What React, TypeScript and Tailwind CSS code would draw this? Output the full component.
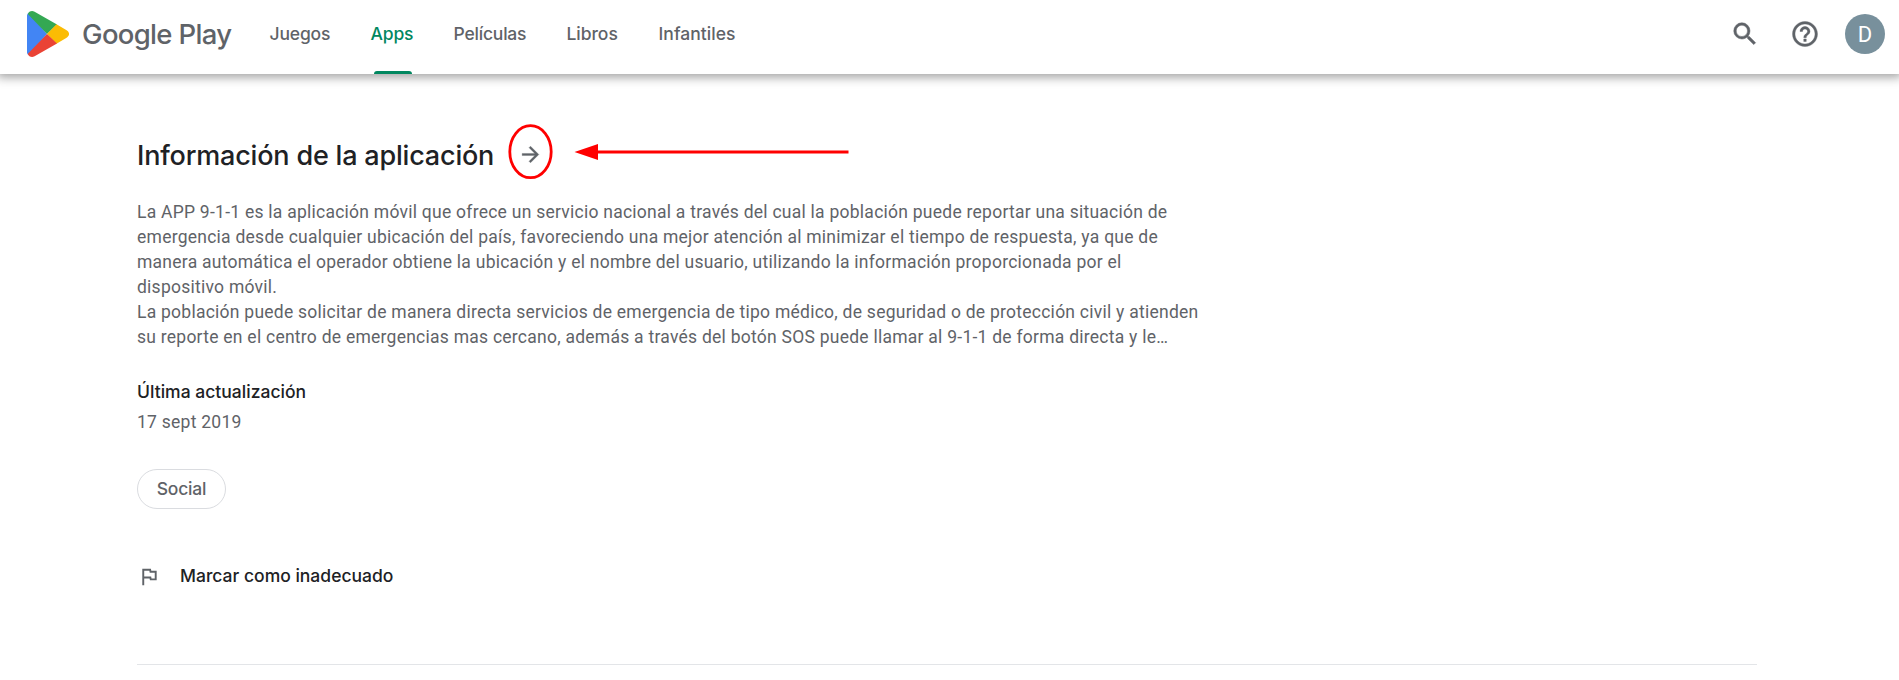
const navItems = [
  { label: "Juegos", box: "w-[101px]", active: false, track: "tracking-[-0.15px]" },
  { label: "Apps", box: "w-[83px]", active: true, track: "tracking-[-0.15px]" },
  { label: "Películas", box: "w-[113px]", active: false, track: "tracking-[-0.2px]" },
  { label: "Libros", box: "w-[92px]", active: false, track: "tracking-[-0.05px]" },
  { label: "Infantiles", box: "w-[80px]", active: false, track: "tracking-[0.05px]" },
];

function PlayLogo() {
  return (
    <svg className="h-[46px] w-[42px] shrink-0" viewBox="0 0 42 46">
      <path fill="#4285f4" d="M1.4 1.8C.5 2.7 0 3.6 0 5v36c0 1.400.5 2.500 1.400 3.200L20 23Z" />
      <path fill="#34a853" d="M1.200 2.300C2.500.100 5.200-.600 7.600.800L30 13.600 20 23 1 3.200Z" />
      <path fill="#fbbc04" d="M29.500 13.300 39.200 19c3.800 2.200 3.800 5.800 0 8L29.500 32.700 20 23Z" />
      <path fill="#ea4335" d="M1.200 43.700C2.500 45.900 5.200 46.600 7.600 45.200L30 32.400 20 23 .900 42.800Z" />
    </svg>
  );
}

function Header() {
  return (
    <header className="flex h-[74px] items-start bg-white pl-[27px] pr-[14px] shadow-[0_0_10px_3px_rgba(0,0,0,0.39)]">
      <div className="flex w-[242.5px] items-start gap-[13px] pt-[11px]">
        <PlayLogo />
        <span className="whitespace-nowrap text-[27.5px] font-medium leading-[46px] tracking-[-0.68px]">Google Play</span>
      </div>
      <nav className="flex h-full flex-1 text-[17.5px] font-medium">
        {navItems.map((item) => (
          <div key={item.label} className={`${item.box} flex h-full flex-col items-start justify-between`}>
            <a className={`${item.track} pt-[21px] leading-[26px] ${item.active ? "text-[#01875f]" : ""}`}>{item.label}</a>
            {item.active && <span className="ml-[3px] h-[3px] w-[38px] rounded-t-[3px] bg-[#01875f]" />}
          </div>
        ))}
      </nav>
      <div className="flex items-center pt-[14px]">
        <svg className="mr-[30px] h-[30px] w-[30px] overflow-visible" viewBox="0 0 24 24" fill="currentColor" stroke="currentColor" strokeWidth="0.4">
          <path d="M15.5 14h-.79l-.28-.27A6.471 6.471 0 0 0 16 9.500 6.500 6.500 0 1 0 9.500 16c1.610 0 3.090-.590 4.230-1.570l.270.280v.790l5 4.990L20.490 19l-4.990-5zm-6 0C7.010 14 5 11.990 5 9.500S7.010 5 9.500 5 14 7.010 14 9.500 11.990 14 9.500 14z" />
        </svg>
        <svg className="mr-[25px] h-[30px] w-[30px] overflow-visible" viewBox="0 0 24 24" fill="currentColor" stroke="currentColor" strokeWidth="0.3">
          <path d="M11 18h2v-2h-2v2zm1-16C6.480 2 2 6.480 2 12s4.480 10 10 10 10-4.480 10-10S17.520 2 12 2zm0 18c-4.410 0-8-3.590-8-8s3.590-8 8-8 8 3.590 8 8-3.590 8-8 8zm0-14c-2.210 0-4 1.790-4 4h2c0-1.100.900-2 2-2s2 .900 2 2c0 2-3 1.750-3 5h2c0-2.250 3-2.500 3-5 0-2.210-1.790-4-4-4z" />
        </svg>
        <div className="flex h-10 w-10 items-center justify-center rounded-full bg-[#78909c] pt-px font-['Roboto',sans-serif] text-[22px] leading-none text-white">D</div>
      </div>
    </header>
  );
}

export default function App() {
  return (
    <div className="relative h-[680px] overflow-hidden bg-white font-['Inter','Liberation_Sans',sans-serif] text-[#5f6368]">
      <Header />
      <main className="ml-[137px] w-[1620px]">
        <div className="mt-[50px] flex h-[60px] items-center pt-px">
          <h2 className="w-[381px] whitespace-nowrap pt-[3px] text-[27px] font-medium tracking-[-0.19px] text-[#202124]">Información de la aplicación</h2>
          <svg className="h-[25px] w-[25px]" viewBox="0 0 24 24" fill="currentColor" stroke="currentColor" strokeWidth="0.3">
            <path d="M12 4l-1.410 1.410L16.170 11H4v2h12.170l-5.580 5.590L12 20l8-8z" />
          </svg>
        </div>
        <div className="mt-[16px] whitespace-nowrap font-['Roboto',sans-serif] text-[17.5px] leading-[25px] tracking-[0.25px]">
          <p>
            La APP 9-1-1 es la aplicación móvil que ofrece un servicio nacional a través del cual la población puede reportar una situación de<br />
            emergencia desde cualquier ubicación del país, favoreciendo una mejor atención al minimizar el tiempo de respuesta, ya que de<br />
            manera automática el operador obtiene la ubicación y el nombre del usuario, utilizando la información proporcionada por el<br />
            dispositivo móvil.
          </p>
          <p>
            La población puede solicitar de manera directa servicios de emergencia de tipo médico, de seguridad o de protección civil y atienden<br />
            su reporte en el centro de emergencias mas cercano, además a través del botón SOS puede llamar al 9-1-1 de forma directa y le…
          </p>
        </div>
        <h3 className="mt-[27px] text-[17.5px] font-medium leading-[30px] tracking-[0.02px] text-[#202124]">Última actualización</h3>
        <p className="mt-[3px] font-['Roboto',sans-serif] text-[17.5px] leading-[25px] tracking-[0.25px]">17 sept 2019</p>
        <div className="mt-[34px] flex h-10 w-[89px] items-center justify-center rounded-full border border-[#dadce0] text-[17.5px] font-medium tracking-[-0.2px]">Social</div>
        <div className="mt-[52px] flex h-[30px] items-center gap-[19px]">
          <svg className="h-[23px] w-[24px]" viewBox="0 0 24 24" fill="currentColor">
            <path d="M12.360 6l.400 2H18v6h-3.360l-.400-2H7V6h5.360M14 4H5v17h2v-7h5.600l.400 2h7V6h-5.600L14 4z" />
          </svg>
          <span className="text-[17.5px] font-medium text-[#202124]">Marcar como inadecuado</span>
        </div>
        <div className="mt-[73px] h-px bg-[#e3e5e8]" />
      </main>
      <svg className="absolute left-[506px] top-[122px] h-[60px] w-[346px]" viewBox="0 0 346 60" fill="none">
        <ellipse cx="24.500" cy="29.700" rx="20.700" ry="26" stroke="#f00" strokeWidth="2.800" />
        <path d="M90 29.900H342.500" stroke="#f00" strokeWidth="3" />
        <path d="M68.500 29.900 92 22v16Z" fill="#f00" />
      </svg>
    </div>
  );
}
